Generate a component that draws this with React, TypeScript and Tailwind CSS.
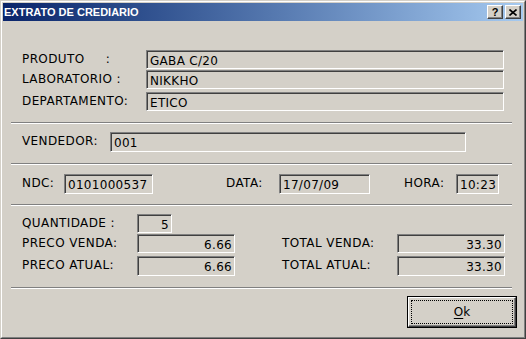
import React from 'react';

const font = "font-['DejaVu_Sans',sans-serif]";

const Field: React.FC<{ value: string; w: string; h?: string; right?: boolean }> = ({ value, w, h = 'h-[19px]', right }) => (
  <div
    className={`${w} ${h} flex items-center ${right ? 'justify-end pr-[2px]' : 'pl-[3px]'} border border-t-[#808080] border-l-[#808080] border-r-white border-b-white shadow-[inset_1px_1px_0_#404040] bg-[#d4d0c8] text-[12px] tracking-[0.3px] text-black leading-none pt-[2px] whitespace-nowrap overflow-hidden`}
  >
    {value}
  </div>
);

const Label: React.FC<{ text: string; w: string }> = ({ text, w }) => (
  <div className={`${w} shrink-0 text-[12px] tracking-[0.4px] text-black leading-none pb-[2px] whitespace-pre`}>{text}</div>
);

const Separator: React.FC<{ mt: string }> = ({ mt }) => (
  <div className={`${mt} h-[2px] w-[501px] border-t border-t-[#808080] border-b border-b-white`} />
);

const TitleButton: React.FC<{ children: React.ReactNode }> = ({ children }) => (
  <div className="w-[16px] h-[14px] flex items-center justify-center bg-[#d4d0c8] border border-t-white border-l-white border-r-[#404040] border-b-[#404040] shadow-[inset_-1px_-1px_0_#808080]">
    {children}
  </div>
);

const App: React.FC = () => {
  return (
    <div className={`w-[526px] h-[339px] bg-[#d4d0c8] border border-t-[#d4d0c8] border-l-[#d4d0c8] border-r-[#404040] border-b-[#404040] ${font}`}>
      <div className="h-full border border-t-white border-l-white border-r-[#808080] border-b-[#808080] p-[1px] flex flex-col">
        {/* title bar */}
        <div className="h-[18px] shrink-0 flex items-center justify-between pl-[1px] pr-[2px] bg-gradient-to-r from-[#0a246a] to-[#a6caf0]">
          <span className="font-['Liberation_Sans',sans-serif] font-bold text-[11px] text-white leading-none">EXTRATO DE CREDIARIO</span>
          <div className="flex gap-[2px]">
            <TitleButton>
              <span className="font-['Liberation_Sans',sans-serif] font-bold text-[11px] leading-none text-black">?</span>
            </TitleButton>
            <TitleButton>
              <svg width="8" height="7" viewBox="0 0 8 7">
                <path d="M0.5 0.5 L7.5 6.5 M7.5 0.5 L0.5 6.5" stroke="black" strokeWidth="1.6" />
              </svg>
            </TitleButton>
          </div>
        </div>

        {/* body */}
        <div className="flex flex-col pl-[8px] pr-[11px]">
          <div className="pl-[11px] pt-[29px] flex flex-col">
            <div className="flex items-center">
              <Label text="PRODUTO     :" w="w-[124px]" />
              <Field value="GABA C/20" w="w-[358px]" />
            </div>
            <div className="flex items-center mt-[1px]">
              <Label text="LABORATORIO :" w="w-[124px]" />
              <Field value="NIKKHO" w="w-[358px]" />
            </div>
            <div className="flex items-center mt-[3px]">
              <Label text="DEPARTAMENTO:" w="w-[124px]" />
              <Field value="ETICO" w="w-[358px]" />
            </div>
          </div>

          <Separator mt="mt-[11px]" />

          <div className="pl-[11px] mt-[8px] flex items-center">
            <Label text="VENDEDOR:" w="w-[88px]" />
            <Field value="001" w="w-[356px]" h="h-[20px]" />
          </div>

          <Separator mt="mt-[11px]" />

          <div className="pl-[11px] mt-[9px] flex items-center">
            <Label text="NDC:" w="w-[42px]" />
            <Field value="0101000537" w="w-[89px]" h="h-[20px]" />
            <div className="ml-[73px]">
              <Label text="DATA:" w="w-[53px]" />
            </div>
            <Field value="17/07/09" w="w-[91px]" h="h-[20px]" />
            <div className="ml-[34px]">
              <Label text="HORA:" w="w-[52px]" />
            </div>
            <Field value="10:23" w="w-[43px]" h="h-[20px]" />
          </div>

          <Separator mt="mt-[10px]" />

          <div className="pl-[11px] mt-[8px] flex flex-col">
            <div className="flex items-center">
              <Label text="QUANTIDADE :" w="w-[115px]" />
              <Field value="5" w="w-[35px]" right />
            </div>
            <div className="flex items-center mt-[1px]">
              <Label text="PRECO VENDA:" w="w-[115px]" />
              <Field value="6.66" w="w-[98px]" right />
              <div className="ml-[47px]">
                <Label text="TOTAL VENDA:" w="w-[115px]" />
              </div>
              <Field value="33.30" w="w-[108px]" right />
            </div>
            <div className="flex items-center mt-[3px]">
              <Label text="PRECO ATUAL:" w="w-[115px]" />
              <Field value="6.66" w="w-[98px]" h="h-[20px]" right />
              <div className="ml-[47px]">
                <Label text="TOTAL ATUAL:" w="w-[115px]" />
              </div>
              <Field value="33.30" w="w-[108px]" h="h-[20px]" right />
            </div>
          </div>

          <Separator mt="mt-[11px]" />

          <div className="mt-[7px] ml-[396px]">
            <button className="w-[110px] h-[32px] border border-black bg-[#d4d0c8] p-0 block">
              <div className="w-full h-full border border-t-white border-l-white border-r-[#404040] border-b-[#404040] shadow-[inset_-1px_-1px_0_#808080] p-[2px]">
                <div className="w-full h-full border border-dotted border-black flex items-center justify-center text-[12px] text-black leading-none">
                  <span>
                    <span className="underline underline-offset-2">O</span>k
                  </span>
                </div>
              </div>
            </button>
          </div>
        </div>
      </div>
    </div>
  );
};

export default App;
